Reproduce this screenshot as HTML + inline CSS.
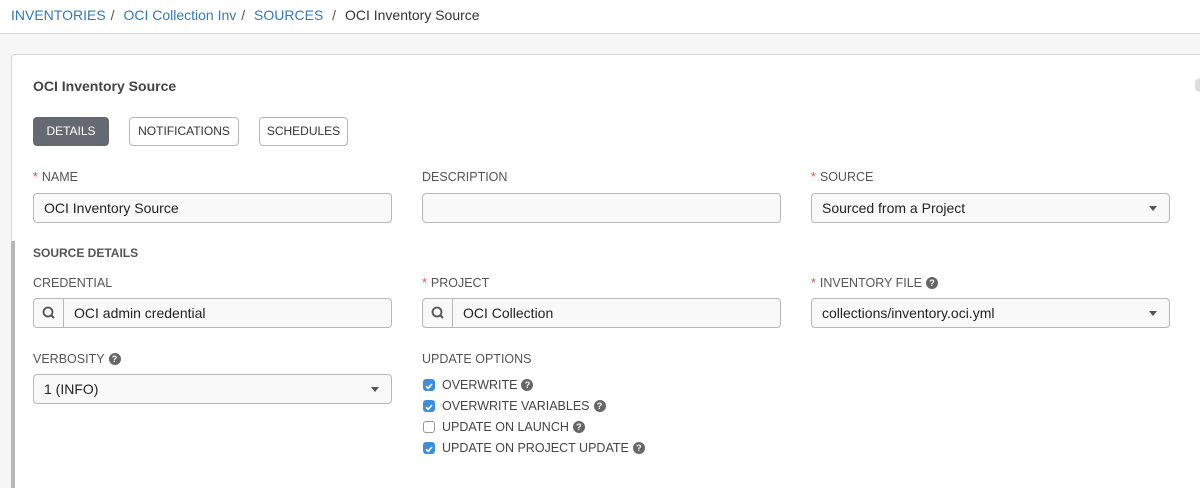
<!DOCTYPE html>
<html><head><style>
*{box-sizing:border-box;margin:0;padding:0}
html{width:1200px;height:488px;overflow:hidden}
body{width:1200px;height:488px;overflow:hidden;background:#f6f6f6;font-family:"Liberation Sans",sans-serif;color:#333;position:relative}
.top{position:absolute;left:0;top:0;width:1200px;height:34px;background:#fff;border-bottom:1px solid #d7d7d7;font-size:14px;padding:7px 0 0 11px}
.top a{color:#337ab7;text-decoration:none}
.top span.s{color:#555;margin:0 5px}
.card{position:absolute;left:11px;top:54px;width:1189px;height:434px;background:#fff;border:1px solid #d7d7d7;border-right:none;border-bottom:none;border-radius:4px 0 0 0}
.bar{position:absolute;left:11px;top:241px;width:4px;height:247px;background:#b7b7b7}
.abs{position:absolute}
.title{left:33px;top:78px;font-weight:bold;font-size:14px;color:#444}
.tab{position:absolute;top:117px;height:29px;border:1px solid #b7b7b7;border-radius:4px;font-size:12px;color:#333;text-align:center;line-height:27px;background:#fff}
.lbl{position:absolute;font-size:12.5px;color:#555}
.req{color:#d9534f;margin-right:4px}
.inp{position:absolute;width:359px;height:30px;border:1px solid #b7b7b7;border-radius:4px;background:#f9f9f9;font-size:14px;line-height:28px;padding-left:10px;color:#222}
.caret{position:absolute;right:12px;top:12px;width:0;height:0;border-left:4px solid transparent;border-right:4px solid transparent;border-top:5px solid #555}
.srch{position:absolute;left:0;top:0;width:30px;height:28px;border-right:1px solid #b7b7b7}
.q{display:inline-block;width:12px;height:12px;border-radius:50%;background:#666;color:#fff;font-size:9px;font-weight:bold;text-align:center;line-height:12px;vertical-align:1px;margin-left:4px}
.cb{position:absolute;left:423px;width:12px;height:12px;border-radius:3px}
.cb.on{background:#3d8de0}
.cb.off{border:1px solid #999;background:#fff}
.cbl{position:absolute;left:442px;font-size:12.5px;color:#444}
</style></head><body>
<div class="top"><a>INVENTORIES</a><span class="s">/</span> <a>OCI Collection Inv</a><span class="s">/</span> <a>SOURCES</a> <span class="s">/</span> <span>OCI Inventory Source</span></div>
<div class="card"></div>
<div class="bar"></div>
<div class="abs" style="left:1195px;top:78px;width:5px;height:14px;border-radius:7px 0 0 7px;background:#ddd"></div>
<div class="abs title">OCI Inventory Source</div>
<div class="tab" style="left:33px;width:76px;background:#646972;border-color:#646972;color:#fff">DETAILS</div>
<div class="tab" style="left:129px;width:110px">NOTIFICATIONS</div>
<div class="tab" style="left:259px;width:89px">SCHEDULES</div>

<div class="lbl" style="left:33px;top:170px"><span class="req">*</span>NAME</div>
<div class="lbl" style="left:422px;top:170px">DESCRIPTION</div>
<div class="lbl" style="left:811px;top:170px"><span class="req">*</span>SOURCE</div>
<div class="inp" style="left:33px;top:193px">OCI Inventory Source</div>
<div class="inp" style="left:422px;top:193px"></div>
<div class="inp" style="left:811px;top:193px">Sourced from a Project<div class="caret"></div></div>

<div class="lbl" style="left:33px;top:246px;font-weight:bold;color:#555;font-size:12px">SOURCE DETAILS</div>
<div class="lbl" style="left:33px;top:276px">CREDENTIAL</div>
<div class="lbl" style="left:422px;top:276px"><span class="req">*</span>PROJECT</div>
<div class="lbl" style="left:811px;top:276px"><span class="req">*</span>INVENTORY FILE<span class="q">?</span></div>
<div class="inp" style="left:33px;top:298px;padding-left:40px"><div class="srch"><svg width="30" height="28"><circle cx="14" cy="13" r="4.5" fill="none" stroke="#555" stroke-width="1.8"/><line x1="17.3" y1="16.3" x2="20" y2="19" stroke="#555" stroke-width="2"/></svg></div>OCI admin credential</div>
<div class="inp" style="left:422px;top:298px;padding-left:40px"><div class="srch"><svg width="30" height="28"><circle cx="14" cy="13" r="4.5" fill="none" stroke="#555" stroke-width="1.8"/><line x1="17.3" y1="16.3" x2="20" y2="19" stroke="#555" stroke-width="2"/></svg></div>OCI Collection</div>
<div class="inp" style="left:811px;top:298px">collections/inventory.oci.yml<div class="caret"></div></div>

<div class="lbl" style="left:33px;top:352px">VERBOSITY<span class="q">?</span></div>
<div class="lbl" style="left:422px;top:352px">UPDATE OPTIONS</div>
<div class="inp" style="left:33px;top:374px">1 (INFO)<div class="caret"></div></div>

<div class="cb on" style="top:379px"><svg width="12" height="12"><path d="M3 6.2L5.2 8.3 9 4" fill="none" stroke="#fff" stroke-width="1.6"/></svg></div><div class="cbl" style="top:378px">OVERWRITE<span class="q">?</span></div>
<div class="cb on" style="top:400px"><svg width="12" height="12"><path d="M3 6.2L5.2 8.3 9 4" fill="none" stroke="#fff" stroke-width="1.6"/></svg></div><div class="cbl" style="top:399px">OVERWRITE VARIABLES<span class="q">?</span></div>
<div class="cb off" style="top:421px"></div><div class="cbl" style="top:420px">UPDATE ON LAUNCH<span class="q">?</span></div>
<div class="cb on" style="top:442px"><svg width="12" height="12"><path d="M3 6.2L5.2 8.3 9 4" fill="none" stroke="#fff" stroke-width="1.6"/></svg></div><div class="cbl" style="top:441px">UPDATE ON PROJECT UPDATE<span class="q">?</span></div>
</body></html>
